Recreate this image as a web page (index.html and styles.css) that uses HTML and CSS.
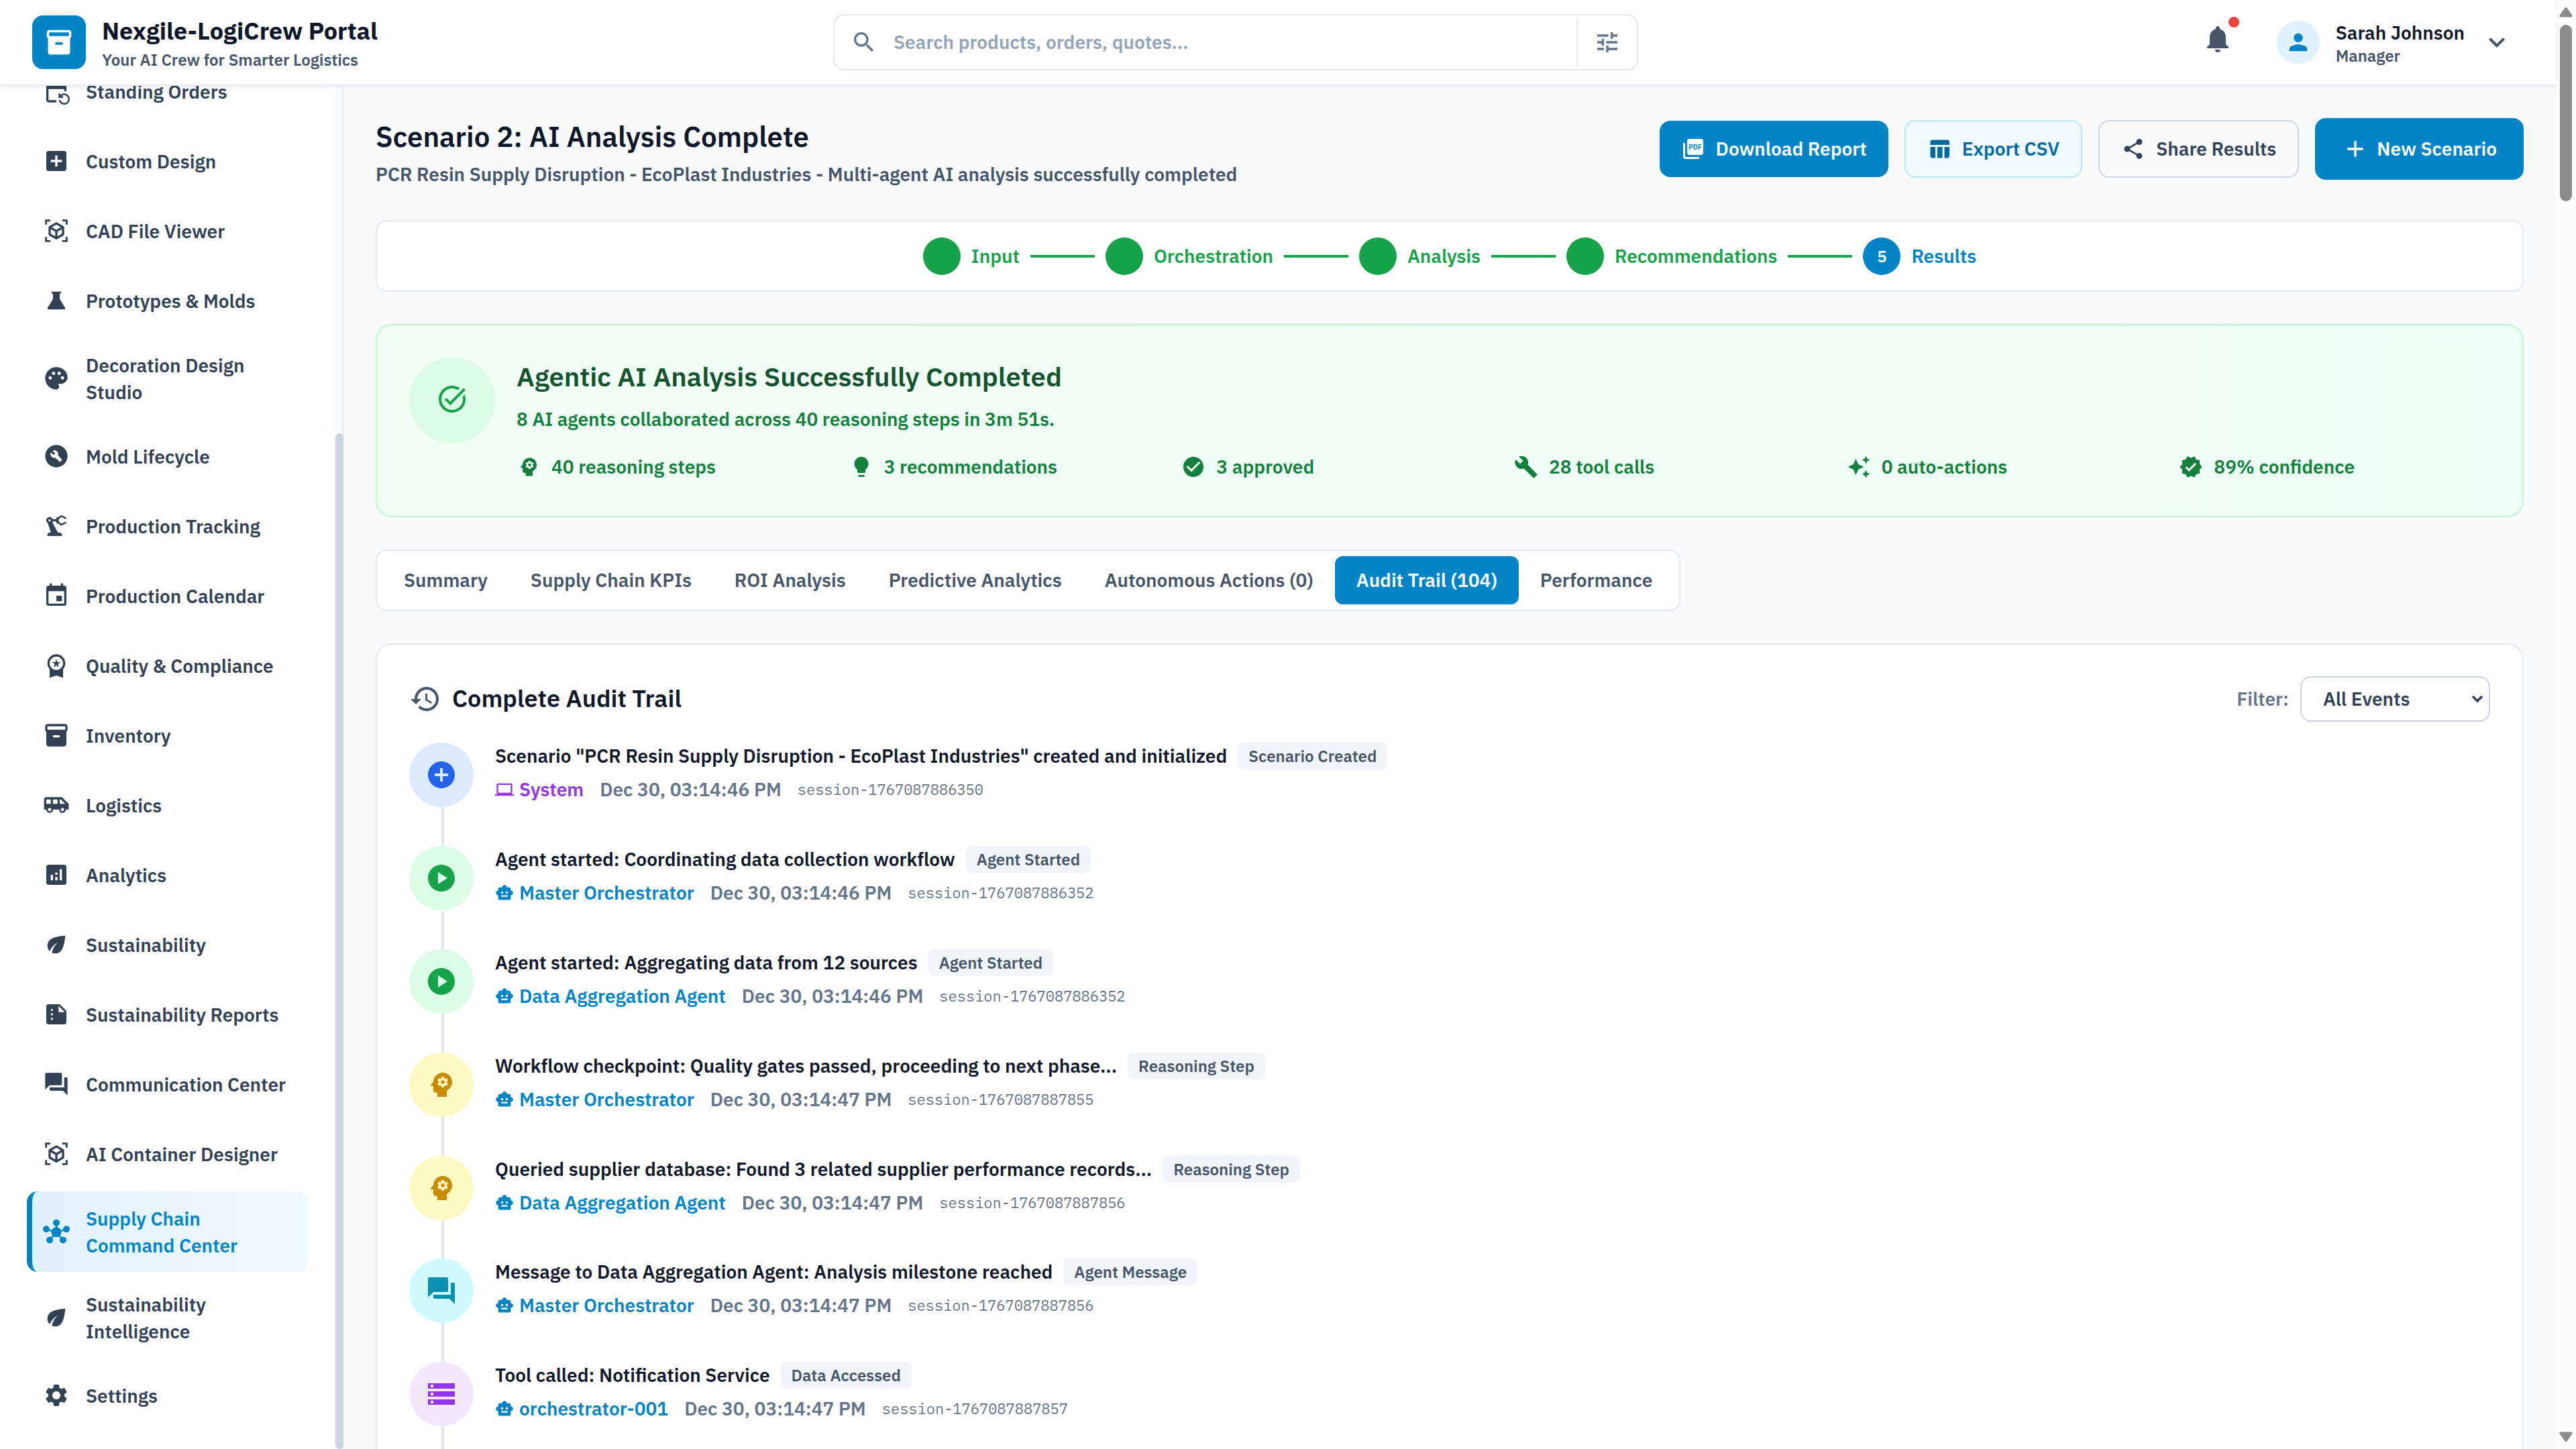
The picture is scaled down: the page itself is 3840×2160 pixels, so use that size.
FILE: index.html
```
<!DOCTYPE html>
<html lang="en">
<head>
	<meta charset="UTF-8">
	<meta name="viewport" content="width=device-width, initial-scale=1.0">
	<title>Nexgile-LogiCrew Portal</title>
	<link rel="stylesheet" href="styles.css">
</head>
<body>
	<!-- icon sprite -->
	<svg class="sprite" xmlns="http://www.w3.org/2000/svg">
		<symbol id="i-inventory" viewBox="0 0 24 24"><path d="M20 2H4c-1 0-2 .9-2 2v3.01c0 .72.43 1.34 1 1.69V20c0 1.1 1.1 2 2 2h14c.9 0 2-.9 2-2V8.7c.57-.35 1-.97 1-1.69V4c0-1.1-1-2-2-2zm-5 12H9v-2h6v2zm5-7H4V4h16v3z"/></symbol>
		<symbol id="i-repeat" viewBox="0 0 24 24"><path d="M21 12V6c0-1.1-.9-2-2-2h-1V2h-2v2H8V2H6v2H5c-1.1 0-2 .9-2 2v14c0 1.1.9 2 2 2h7v-2H5V10h14v2h2zm-5.36 8c.43 1.45 1.77 2.5 3.36 2.5 1.93 0 3.5-1.57 3.5-3.5s-1.57-3.5-3.5-3.5c-.95 0-1.82.38-2.45 1H18V18h-4v-4h1.5v1.43c.9-.88 2.14-1.43 3.5-1.43 2.76 0 5 2.24 5 5s-2.24 5-5 5c-2.42 0-4.44-1.72-4.9-4h1.54z"/></symbol>
		<symbol id="i-addbox" viewBox="0 0 24 24"><path d="M19 3H5c-1.11 0-2 .9-2 2v14c0 1.1.89 2 2 2h14c1.1 0 2-.9 2-2V5c0-1.1-.9-2-2-2zm-2 10h-4v4h-2v-4H7v-2h4V7h2v4h4v2z"/></symbol>
		<symbol id="i-cube" viewBox="0 0 24 24"><path fill="none" stroke="currentColor" stroke-width="1.7" d="M2.8 6.5V2.8h3.9M17.3 2.8h3.9v3.7M21.2 17.5v3.7h-3.9M6.7 21.2H2.8v-3.7"/><path fill="none" stroke="currentColor" stroke-width="2" stroke-linejoin="round" d="M12 5.4l6 3.4v6.5l-6 3.5-6-3.5V8.8zM6 8.8l6 3.5 6-3.5M12 12.3v6.5"/></symbol>
		<symbol id="i-flask" viewBox="0 0 24 24"><path d="M15.96 4H8.04c-.42 0-.65.48-.39.81L9 6.5v4.17L4.2 18.4c-.49.66-.02 1.6.8 1.6h14c.82 0 1.29-.94.8-1.6L15 10.67V6.5l1.35-1.69c.26-.33.03-.81-.39-.81z"/></symbol>
		<symbol id="i-palette" viewBox="0 0 24 24"><path d="M12 2C6.49 2 2 6.49 2 12s4.49 10 10 10c1.38 0 2.5-1.12 2.5-2.5 0-.61-.23-1.2-.64-1.67-.08-.1-.13-.21-.13-.33 0-.28.22-.5.5-.5H16c3.31 0 6-2.69 6-6 0-4.96-4.49-9-10-9zm5.5 11c-.83 0-1.5-.67-1.5-1.5s.67-1.5 1.5-1.5 1.5.67 1.5 1.5-.67 1.5-1.5 1.5zm-3-4c-.83 0-1.5-.67-1.5-1.5S13.67 6 14.5 6s1.5.67 1.5 1.5S15.33 9 14.5 9zM5 11.5c0-.83.67-1.5 1.5-1.5s1.5.67 1.5 1.5S7.33 13 6.5 13 5 12.33 5 11.5zm6-4c0 .83-.67 1.5-1.5 1.5S8 8.33 8 7.5 8.67 6 9.5 6s1.5.67 1.5 1.5z"/></symbol>
		<symbol id="i-buildcircle" viewBox="0 0 24 24"><path d="M12 2C6.48 2 2 6.48 2 12s4.48 10 10 10 10-4.48 10-10S17.52 2 12 2zm4.9 13.49l-1.4 1.4c-.2.2-.51.2-.71 0l-3.41-3.41c-1.22.43-2.64.17-3.62-.81-1.11-1.11-1.3-2.79-.59-4.1l2.35 2.35 1.41-1.41-2.35-2.34c1.32-.71 2.99-.52 4.1.59.98.98 1.24 2.4.81 3.62l3.41 3.41c.19.19.19.51 0 .7z"/></symbol>
		<symbol id="i-robotarm" viewBox="0 0 24 24"><path d="M19.93 8.35l-3.6 1.68L14 7.7V6.3l2.33-2.33 3.6 1.68c.38.18.82.01 1-.36.18-.38.01-.82-.36-1l-3.92-1.83c-.38-.18-.83-.1-1.13.2L13.78 4.4c-.18-.24-.46-.4-.78-.4-.55 0-1 .45-1 1v1H8.82C8.4 4.84 7.3 4 6 4 4.34 4 3 5.34 3 7c0 1.1.6 2.05 1.48 2.58L7.08 18H6c-1.1 0-2 .9-2 2v1h13v-1c0-1.1-.9-2-2-2h-1.62L8.41 8.77c.17-.24.31-.49.41-.77H12v1c0 .55.45 1 1 1 .32 0 .6-.16.78-.4l1.74 1.74c.3.3.75.38 1.13.2l3.92-1.83c.38-.18.54-.62.36-1-.18-.37-.62-.54-1-.36zM6 8c-.55 0-1-.45-1-1s.45-1 1-1 1 .45 1 1-.45 1-1 1z"/></symbol>
		<symbol id="i-calendar" viewBox="0 0 24 24"><path d="M17 12h-5v5h5v-5zM16 1v2H8V1H6v2H5c-1.11 0-1.99.9-1.99 2L3 19c0 1.1.89 2 2 2h14c1.1 0 2-.9 2-2V5c0-1.1-.9-2-2-2h-1V1h-2zm3 18H5V8h14v11z"/></symbol>
		<symbol id="i-premium" viewBox="0 0 24 24"><path d="M9.68 13.69L12 11.93l2.31 1.76-.88-2.85L15.75 9h-2.84L12 6.19 11.09 9H8.25l2.31 1.84-.88 2.85zM20 10c0-4.42-3.58-8-8-8s-8 3.58-8 8c0 2.03.76 3.87 2 5.28V23l6-2 6 2v-7.72c1.24-1.41 2-3.25 2-5.28zm-8-6c3.31 0 6 2.69 6 6s-2.69 6-6 6-6-2.69-6-6 2.69-6 6-6z"/></symbol>
		<symbol id="i-shuttle" viewBox="0 0 24 24"><path d="M17 5H3c-1.1 0-2 .89-2 2v9h2c0 1.65 1.34 3 3 3s3-1.35 3-3h5.5c0 1.65 1.34 3 3 3s3-1.35 3-3H23v-5l-6-6zM3 11V7h4v4H3zm3 6.5c-.83 0-1.5-.67-1.5-1.5s.67-1.5 1.5-1.5 1.5.67 1.5 1.5-.67 1.5-1.5 1.5zm7-6.5H9V7h4v4zm4.5 6.5c-.83 0-1.5-.67-1.5-1.5s.67-1.5 1.5-1.5 1.5.67 1.5 1.5-.67 1.5-1.5 1.5zM15 11V7h1l4 4h-5z"/></symbol>
		<symbol id="i-analytics" viewBox="0 0 24 24"><path d="M19 3H5c-1.1 0-2 .9-2 2v14c0 1.1.9 2 2 2h14c1.1 0 2-.9 2-2V5c0-1.1-.9-2-2-2zM9 17H7v-5h2v5zm4 0h-2v-3h2v3zm0-5h-2v-2h2v2zm4 5h-2V7h2v10z"/></symbol>
		<symbol id="i-eco" viewBox="0 0 24 24"><path d="M6.05 8.05c-2.73 2.73-2.73 7.15-.02 9.88 1.47-3.4 4.09-6.24 7.36-7.93-2.77 2.34-4.71 5.61-5.39 9.32 2.6 1.23 5.8.78 7.95-1.37C19.43 14.47 20 4 20 4S9.53 4.57 6.05 8.05z"/></symbol>
		<symbol id="i-summarize" viewBox="0 0 24 24"><path d="M15 3H5c-1.1 0-1.99.9-1.99 2L3 19c0 1.1.89 2 1.99 2H19c1.1 0 2-.9 2-2V9l-6-6zM8 17c-.55 0-1-.45-1-1s.45-1 1-1 1 .45 1 1-.45 1-1 1zm0-4c-.55 0-1-.45-1-1s.45-1 1-1 1 .45 1 1-.45 1-1 1zm0-4c-.55 0-1-.45-1-1s.45-1 1-1 1 .45 1 1-.45 1-1 1zm6 1V4.5l5.5 5.5H14z"/></symbol>
		<symbol id="i-forum" viewBox="0 0 24 24"><path d="M21 6h-2v9H6v2c0 .55.45 1 1 1h11l4 4V7c0-.55-.45-1-1-1zm-4 6V3c0-.55-.45-1-1-1H3c-.55 0-1 .45-1 1v14l4-4h10c.55 0 1-.45 1-1z"/></symbol>
		<symbol id="i-hub" viewBox="0 0 24 24"><circle cx="12" cy="12.5" r="4.5"/><circle cx="12" cy="4" r="3"/><circle cx="3" cy="9.8" r="3"/><circle cx="21" cy="9.8" r="3"/><circle cx="6" cy="19.5" r="3"/><circle cx="18" cy="19.5" r="3"/><path fill="none" stroke="currentColor" stroke-width="1.5" d="M12 3v9.5M3 9.8l9 2.7 9-2.7M6 19.5l6-7 6 7"/></symbol>
		<symbol id="i-settings" viewBox="0 0 24 24"><path d="M19.14 12.94c.04-.3.06-.61.06-.94 0-.32-.02-.64-.07-.94l2.03-1.58c.18-.14.23-.41.12-.61l-1.92-3.32c-.12-.22-.37-.29-.59-.22l-2.39.96c-.5-.38-1.03-.7-1.62-.94l-.36-2.54c-.04-.24-.24-.41-.48-.41h-3.84c-.24 0-.43.17-.47.41l-.36 2.54c-.59.24-1.13.57-1.62.94l-2.39-.96c-.22-.08-.47 0-.59.22L2.74 8.87c-.12.21-.08.47.12.61l2.03 1.58c-.05.3-.09.63-.09.94s.02.64.07.94l-2.03 1.58c-.18.14-.23.41-.12.61l1.92 3.32c.12.22.37.29.59.22l2.39-.96c.5.38 1.03.7 1.62.94l.36 2.54c.05.24.24.41.48.41h3.84c.24 0 .44-.17.47-.41l.36-2.54c.59-.24 1.13-.56 1.62-.94l2.39.96c.22.08.47 0 .59-.22l1.92-3.32c.12-.22.07-.47-.12-.61l-2.01-1.58zM12 15.6c-1.98 0-3.6-1.62-3.6-3.6s1.62-3.6 3.6-3.6 3.6 1.62 3.6 3.6-1.62 3.6-3.6 3.6z"/></symbol>
		<symbol id="i-search" viewBox="0 0 24 24"><path d="M15.5 14h-.79l-.28-.27C15.41 12.59 16 11.11 16 9.5 16 5.91 13.09 3 9.5 3S3 5.91 3 9.5 5.91 16 9.5 16c1.61 0 3.09-.59 4.23-1.57l.27.28v.79l5 4.99L20.49 19l-4.99-5zm-6 0C7.01 14 5 11.99 5 9.5S7.01 5 9.5 5 14 7.01 14 9.5 11.99 14 9.5 14z"/></symbol>
		<symbol id="i-tune" viewBox="0 0 24 24"><path d="M3 17v2h6v-2H3zM3 5v2h10V5H3zm10 16v-2h8v-2h-8v-2h-2v6h2zM7 9v2H3v2h4v2h2V9H7zm14 4v-2H11v2h10zm-6-4h2V7h4V5h-4V3h-2v6z"/></symbol>
		<symbol id="i-bell" viewBox="0 0 24 24"><path d="M12 22c1.1 0 2-.9 2-2h-4c0 1.1.89 2 2 2zm6-6v-5c0-3.07-1.64-5.64-4.5-6.32V4c0-.83-.67-1.5-1.5-1.5s-1.5.67-1.5 1.5v.68C7.63 5.36 6 7.92 6 11v5l-2 2v1h16v-1l-2-2z"/></symbol>
		<symbol id="i-person" viewBox="0 0 24 24"><path d="M12 12c2.21 0 4-1.79 4-4s-1.79-4-4-4-4 1.79-4 4 1.79 4 4 4zm0 2c-2.67 0-8 1.34-8 4v2h16v-2c0-2.66-5.33-4-8-4z"/></symbol>
		<symbol id="i-chevron" viewBox="0 0 24 24"><path d="M16.59 8.59L12 13.17 7.41 8.59 6 10l6 6 6-6z"/></symbol>
		<symbol id="i-pdf" viewBox="0 0 24 24"><path d="M20 2H8c-1.1 0-2 .9-2 2v12c0 1.1.9 2 2 2h12c1.1 0 2-.9 2-2V4c0-1.1-.9-2-2-2zM4 6H2v14c0 1.1.9 2 2 2h14v-2H4V6z"/><text class="pdf-text" x="14" y="12.7" text-anchor="middle" textLength="13">PDF</text></symbol>
		<symbol id="i-table" viewBox="0 0 24 24"><path d="M10 10.02h5V21h-5zM17 21h3c1.1 0 2-.9 2-2v-9h-5v11zm3-18H5c-1.1 0-2 .9-2 2v3h19V5c0-1.1-.9-2-2-2zM3 19c0 1.1.9 2 2 2h3V10H3v9z"/></symbol>
		<symbol id="i-share" viewBox="0 0 24 24"><path d="M18 16.08c-.76 0-1.44.3-1.96.77L8.91 12.7c.05-.23.09-.46.09-.7s-.04-.47-.09-.7l7.05-4.11c.54.5 1.25.81 2.04.81 1.66 0 3-1.34 3-3s-1.34-3-3-3-3 1.34-3 3c0 .24.04.47.09.7L8.04 9.81C7.5 9.31 6.79 9 6 9c-1.66 0-3 1.34-3 3s1.34 3 3 3c.79 0 1.5-.31 2.04-.81l7.12 4.16c-.05.21-.08.43-.08.65 0 1.61 1.31 2.92 2.92 2.92s2.92-1.31 2.92-2.92-1.31-2.92-2.92-2.92z"/></symbol>
		<symbol id="i-add" viewBox="0 0 24 24"><path d="M19 13h-6v6h-2v-6H5v-2h6V5h2v6h6v2z"/></symbol>
		<symbol id="i-task" viewBox="0 0 24 24"><path d="M22 5.18L10.59 16.6l-4.24-4.24 1.41-1.41 2.83 2.83 10-10L22 5.18zm-2.21 5.04c.13.57.21 1.17.21 1.78 0 4.42-3.58 8-8 8s-8-3.58-8-8 3.58-8 8-8c1.58 0 3.04.46 4.28 1.25l1.44-1.44C16.1 2.67 14.13 2 12 2 6.48 2 2 6.48 2 12s4.48 10 10 10 10-4.48 10-10c0-1.19-.22-2.33-.6-3.39l-1.61 1.61z"/></symbol>
		<symbol id="i-psychology" viewBox="0 0 24 24"><path d="M13 8.57c-.79 0-1.43.64-1.43 1.43s.64 1.43 1.43 1.43 1.43-.64 1.43-1.43-.64-1.43-1.43-1.43z"/><path d="M13 3C9.25 3 6.2 5.94 6.02 9.64L4.1 12.2c-.25.33-.01.8.4.8H6v3c0 1.1.9 2 2 2h1v3h7v-4.68c2.36-1.12 4-3.53 4-6.32 0-3.87-3.13-7-7-7zm3 7c0 .13-.01.26-.02.39l.83.66c.08.06.1.16.05.25l-.8 1.39c-.05.09-.16.12-.24.09l-.99-.4c-.21.16-.43.29-.67.39L14 13.83c-.01.1-.1.17-.2.17h-1.6c-.1 0-.18-.07-.2-.17l-.15-1.06c-.25-.1-.47-.23-.68-.39l-.99.4c-.09.03-.2 0-.25-.09l-.8-1.39c-.05-.08-.03-.19.05-.25l.84-.66c-.01-.13-.02-.26-.02-.39s.02-.27.04-.39l-.85-.66c-.08-.06-.1-.16-.05-.26l.8-1.38c.05-.09.15-.12.24-.09l1 .4c.2-.15.43-.29.67-.39L12 6.17c.02-.1.1-.17.2-.17h1.6c.1 0 .18.07.2.17l.15 1.06c.24.1.46.23.67.39l1-.4c.09-.03.2 0 .24.09l.8 1.38c.05.09.03.2-.05.26l-.85.66c.03.12.04.25.04.39z"/></symbol>
		<symbol id="i-bulb" viewBox="0 0 24 24"><path d="M9 21c0 .55.45 1 1 1h4c.55 0 1-.45 1-1v-1H9v1zm3-19C8.14 2 5 5.14 5 9c0 2.38 1.19 4.47 3 5.74V17c0 .55.45 1 1 1h6c.55 0 1-.45 1-1v-2.26c1.81-1.27 3-3.36 3-5.74 0-3.86-3.14-7-7-7z"/></symbol>
		<symbol id="i-check" viewBox="0 0 24 24"><path d="M12 2C6.48 2 2 6.48 2 12s4.48 10 10 10 10-4.48 10-10S17.52 2 12 2zm-2 15l-5-5 1.41-1.41L10 14.17l7.59-7.59L19 8l-9 9z"/></symbol>
		<symbol id="i-build" viewBox="0 0 24 24"><path d="M22.7 19l-9.1-9.1c.9-2.3.4-5-1.5-6.9-2-2-5-2.4-7.4-1.3L9 6 6 9 1.6 4.7C.4 7.1.9 10.1 2.9 12.1c1.9 1.9 4.6 2.4 6.9 1.5l9.1 9.1c.4.4 1 .4 1.4 0l2.3-2.3c.5-.4.5-1.1.1-1.4z"/></symbol>
		<symbol id="i-awesome" viewBox="0 0 24 24"><path d="M19 9l1.25-2.75L23 5l-2.75-1.25L19 1l-1.25 2.75L15 5l2.75 1.25L19 9zm-7.5.5L9 4 6.5 9.5 1 12l5.5 2.5L9 20l2.5-5.5L17 12l-5.5-2.5zM19 15l-1.25 2.75L15 19l2.75 1.25L19 23l1.25-2.75L23 19l-2.75-1.25L19 15z"/></symbol>
		<symbol id="i-verified" viewBox="0 0 24 24"><path d="M23 12l-2.44-2.79.34-3.69-3.61-.82-1.89-3.2L12 2.96 8.6 1.5 6.71 4.69 3.1 5.5l.34 3.7L1 12l2.44 2.79-.34 3.7 3.61.82L8.6 22.5l3.4-1.47 3.4 1.46 1.89-3.19 3.61-.82-.34-3.69L23 12zm-12.91 4.72l-3.8-3.81 1.48-1.48 2.32 2.33 5.85-5.87 1.48 1.48-7.33 7.35z"/></symbol>
		<symbol id="i-history" viewBox="0 0 24 24"><path d="M13 3c-4.97 0-9 4.03-9 9H1l3.89 3.89.07.14L9 12H6c0-3.87 3.13-7 7-7s7 3.13 7 7-3.13 7-7 7c-1.93 0-3.68-.79-4.94-2.06l-1.42 1.42C8.27 19.99 10.51 21 13 21c4.97 0 9-4.03 9-9s-4.03-9-9-9zm-1 5v5l4.28 2.54.72-1.21-3.5-2.08V8H12z"/></symbol>
		<symbol id="i-addcircle" viewBox="0 0 24 24"><path d="M12 2C6.48 2 2 6.48 2 12s4.48 10 10 10 10-4.48 10-10S17.52 2 12 2zm5 11h-4v4h-2v-4H7v-2h4V7h2v4h4v2z"/></symbol>
		<symbol id="i-play" viewBox="0 0 24 24"><path d="M12 2C6.48 2 2 6.48 2 12s4.48 10 10 10 10-4.48 10-10S17.52 2 12 2zM9.5 16.5v-9l7 4.5-7 4.5z"/></symbol>
		<symbol id="i-storage" viewBox="0 0 24 24"><path d="M2 20h20v-4H2v4zm2-3h2v2H4v-2zM2 4v4h20V4H2zm4 3H4V5h2v2zm-4 7h20v-4H2v4zm2-3h2v2H4v-2z"/></symbol>
		<symbol id="i-computer" viewBox="0 0 24 24"><path d="M20 18c1.1 0 1.99-.9 1.99-2L22 6c0-1.1-.9-2-2-2H4c-1.1 0-2 .9-2 2v10c0 1.1.9 2 2 2H0v2h24v-2h-4zM4 6h16v10H4V6z"/></symbol>
		<symbol id="i-bot" viewBox="0 0 24 24"><path d="M20 9V7c0-1.1-.9-2-2-2h-3c0-1.66-1.34-3-3-3S9 3.34 9 5H6c-1.1 0-2 .9-2 2v2c-1.66 0-3 1.34-3 3s1.34 3 3 3v4c0 1.1.9 2 2 2h12c1.1 0 2-.9 2-2v-4c1.66 0 3-1.34 3-3s-1.34-3-3-3zM7.5 11.5c0-.83.67-1.5 1.5-1.5s1.5.67 1.5 1.5S9.83 13 9 13s-1.5-.67-1.5-1.5zM16 17H8v-2h8v2zm-1-4c-.83 0-1.5-.67-1.5-1.5S14.17 10 15 10s1.5.67 1.5 1.5S15.83 13 15 13z"/></symbol>
	</svg>

	<div class="page">
		<header class="topbar">
			<div class="brand">
				<div class="brand-logo"><svg><use href="#i-inventory"/></svg></div>
				<div class="brand-text">
					<div class="brand-name">Nexgile-LogiCrew Portal</div>
					<div class="brand-tag">Your AI Crew for Smarter Logistics</div>
				</div>
			</div>
			<div class="search">
				<svg class="ic40"><use href="#i-search"/></svg>
				<span class="search-text">Search products, orders, quotes...</span>
				<div class="search-filter"><svg class="ic40"><use href="#i-tune"/></svg></div>
			</div>
			<div class="user">
				<div class="bell"><svg class="ic48"><use href="#i-bell"/></svg><span class="bell-dot"></span></div>
				<div class="avatar"><svg class="ic40"><use href="#i-person"/></svg></div>
				<div class="user-text">
					<div class="user-name">Sarah Johnson</div>
					<div class="user-role">Manager</div>
				</div>
				<svg class="ic48"><use href="#i-chevron"/></svg>
			</div>
		</header>

		<div class="body">
			<aside class="sidebar">
				<nav class="nav">
					<a class="nav-item"><svg><use href="#i-repeat"/></svg><span>Standing Orders</span></a>
					<a class="nav-item"><svg><use href="#i-addbox"/></svg><span>Custom Design</span></a>
					<a class="nav-item"><svg><use href="#i-cube"/></svg><span>CAD File Viewer</span></a>
					<a class="nav-item"><svg><use href="#i-flask"/></svg><span>Prototypes &amp; Molds</span></a>
					<a class="nav-item"><svg><use href="#i-palette"/></svg><span>Decoration Design<br>Studio</span></a>
					<a class="nav-item"><svg><use href="#i-buildcircle"/></svg><span>Mold Lifecycle</span></a>
					<a class="nav-item"><svg><use href="#i-robotarm"/></svg><span>Production Tracking</span></a>
					<a class="nav-item"><svg><use href="#i-calendar"/></svg><span>Production Calendar</span></a>
					<a class="nav-item"><svg><use href="#i-premium"/></svg><span>Quality &amp; Compliance</span></a>
					<a class="nav-item"><svg><use href="#i-inventory"/></svg><span>Inventory</span></a>
					<a class="nav-item"><svg><use href="#i-shuttle"/></svg><span>Logistics</span></a>
					<a class="nav-item"><svg><use href="#i-analytics"/></svg><span>Analytics</span></a>
					<a class="nav-item"><svg><use href="#i-eco"/></svg><span>Sustainability</span></a>
					<a class="nav-item"><svg><use href="#i-summarize"/></svg><span>Sustainability Reports</span></a>
					<a class="nav-item"><svg><use href="#i-forum"/></svg><span>Communication Center</span></a>
					<a class="nav-item"><svg><use href="#i-cube"/></svg><span>AI Container Designer</span></a>
					<a class="nav-item active"><svg><use href="#i-hub"/></svg><span>Supply Chain<br>Command Center</span></a>
					<a class="nav-item"><svg><use href="#i-eco"/></svg><span>Sustainability<br>Intelligence</span></a>
					<a class="nav-item"><svg><use href="#i-settings"/></svg><span>Settings</span></a>
				</nav>
				<div class="side-scroll"><div class="side-thumb"></div></div>
			</aside>

			<main class="main">
				<div class="page-head">
					<div>
						<h1>Scenario 2: AI Analysis Complete</h1>
						<p>PCR Resin Supply Disruption - EcoPlast Industries - Multi-agent AI analysis successfully completed</p>
					</div>
					<div class="actions">
						<button class="btn btn-primary"><svg><use href="#i-pdf"/></svg>Download Report</button>
						<button class="btn btn-light"><svg><use href="#i-table"/></svg>Export CSV</button>
						<button class="btn btn-outline"><svg><use href="#i-share"/></svg>Share Results</button>
						<button class="btn btn-primary btn-new"><svg><use href="#i-add"/></svg>New Scenario</button>
					</div>
				</div>

				<section class="steps">
					<span class="step-dot"></span><span class="step-label">Input</span><span class="step-line"></span>
					<span class="step-dot"></span><span class="step-label">Orchestration</span><span class="step-line"></span>
					<span class="step-dot"></span><span class="step-label">Analysis</span><span class="step-line"></span>
					<span class="step-dot"></span><span class="step-label">Recommendations</span><span class="step-line"></span>
					<span class="step-dot current">5</span><span class="step-label current">Results</span>
				</section>

				<section class="banner">
					<div class="banner-icon"><svg class="ic48"><use href="#i-task"/></svg></div>
					<div class="banner-body">
						<h2>Agentic AI Analysis Successfully Completed</h2>
						<p>8 AI agents collaborated across 40 reasoning steps in 3m 51s.</p>
						<div class="stats">
							<div class="stat"><svg><use href="#i-psychology"/></svg>40 reasoning steps</div>
							<div class="stat"><svg><use href="#i-bulb"/></svg>3 recommendations</div>
							<div class="stat"><svg><use href="#i-check"/></svg>3 approved</div>
							<div class="stat"><svg><use href="#i-build"/></svg>28 tool calls</div>
							<div class="stat"><svg><use href="#i-awesome"/></svg>0 auto-actions</div>
							<div class="stat"><svg><use href="#i-verified"/></svg>89% confidence</div>
						</div>
					</div>
				</section>

				<div class="tabs">
					<a class="tab">Summary</a>
					<a class="tab">Supply Chain KPIs</a>
					<a class="tab">ROI Analysis</a>
					<a class="tab">Predictive Analytics</a>
					<a class="tab">Autonomous Actions (0)</a>
					<a class="tab active">Audit Trail (104)</a>
					<a class="tab">Performance</a>
				</div>

				<section class="card">
					<div class="card-head">
						<svg class="ic48"><use href="#i-history"/></svg>
						<h3>Complete Audit Trail</h3>
						<span class="filter-label">Filter:</span>
						<div class="select"><span>All Events</span><svg viewBox="0 0 18 12"><path d="M2 2l7 7 7-7"/></svg></div>
					</div>

					<div class="event">
						<div class="rail"><div class="badge-icon blue"><svg class="ic48"><use href="#i-addcircle"/></svg></div><div class="rail-line"></div></div>
						<div class="event-body">
							<div class="event-top"><span class="event-title">Scenario "PCR Resin Supply Disruption - EcoPlast Industries" created and initialized</span><span class="tag">Scenario Created</span></div>
							<div class="event-meta"><span class="actor system"><svg><use href="#i-computer"/></svg>System</span><span class="time">Dec 30, 03:14:46 PM</span><span class="session">session-1767087886350</span></div>
						</div>
					</div>
					<div class="event">
						<div class="rail"><div class="badge-icon green"><svg class="ic48"><use href="#i-play"/></svg></div><div class="rail-line"></div></div>
						<div class="event-body">
							<div class="event-top"><span class="event-title">Agent started: Coordinating data collection workflow</span><span class="tag">Agent Started</span></div>
							<div class="event-meta"><span class="actor"><svg><use href="#i-bot"/></svg>Master Orchestrator</span><span class="time">Dec 30, 03:14:46 PM</span><span class="session">session-1767087886352</span></div>
						</div>
					</div>
					<div class="event">
						<div class="rail"><div class="badge-icon green"><svg class="ic48"><use href="#i-play"/></svg></div><div class="rail-line"></div></div>
						<div class="event-body">
							<div class="event-top"><span class="event-title">Agent started: Aggregating data from 12 sources</span><span class="tag">Agent Started</span></div>
							<div class="event-meta"><span class="actor"><svg><use href="#i-bot"/></svg>Data Aggregation Agent</span><span class="time">Dec 30, 03:14:46 PM</span><span class="session">session-1767087886352</span></div>
						</div>
					</div>
					<div class="event">
						<div class="rail"><div class="badge-icon yellow"><svg class="ic48"><use href="#i-psychology"/></svg></div><div class="rail-line"></div></div>
						<div class="event-body">
							<div class="event-top"><span class="event-title">Workflow checkpoint: Quality gates passed, proceeding to next phase...</span><span class="tag">Reasoning Step</span></div>
							<div class="event-meta"><span class="actor"><svg><use href="#i-bot"/></svg>Master Orchestrator</span><span class="time">Dec 30, 03:14:47 PM</span><span class="session">session-1767087887855</span></div>
						</div>
					</div>
					<div class="event">
						<div class="rail"><div class="badge-icon yellow"><svg class="ic48"><use href="#i-psychology"/></svg></div><div class="rail-line"></div></div>
						<div class="event-body">
							<div class="event-top"><span class="event-title">Queried supplier database: Found 3 related supplier performance records...</span><span class="tag">Reasoning Step</span></div>
							<div class="event-meta"><span class="actor"><svg><use href="#i-bot"/></svg>Data Aggregation Agent</span><span class="time">Dec 30, 03:14:47 PM</span><span class="session">session-1767087887856</span></div>
						</div>
					</div>
					<div class="event">
						<div class="rail"><div class="badge-icon cyan"><svg class="ic48"><use href="#i-forum"/></svg></div><div class="rail-line"></div></div>
						<div class="event-body">
							<div class="event-top"><span class="event-title">Message to Data Aggregation Agent: Analysis milestone reached</span><span class="tag">Agent Message</span></div>
							<div class="event-meta"><span class="actor"><svg><use href="#i-bot"/></svg>Master Orchestrator</span><span class="time">Dec 30, 03:14:47 PM</span><span class="session">session-1767087887856</span></div>
						</div>
					</div>
					<div class="event">
						<div class="rail"><div class="badge-icon purple"><svg class="ic48"><use href="#i-storage"/></svg></div><div class="rail-line"></div></div>
						<div class="event-body">
							<div class="event-top"><span class="event-title">Tool called: Notification Service</span><span class="tag">Data Accessed</span></div>
							<div class="event-meta"><span class="actor"><svg><use href="#i-bot"/></svg>orchestrator-001</span><span class="time">Dec 30, 03:14:47 PM</span><span class="session">session-1767087887857</span></div>
						</div>
					</div>
				</section>
			</main>
		</div>
	</div>

	<div class="scrollbar">
		<svg class="arrow" viewBox="0 0 20 16"><path d="M8.5 1.5Q10 0 11.5 1.5L19.5 13Q20 15.5 18 15.5H2Q0 15.5 .5 13z"/></svg>
		<div class="thumb"></div>
		<svg class="arrow down" viewBox="0 0 20 16"><path d="M8.5 1.5Q10 0 11.5 1.5L19.5 13Q20 15.5 18 15.5H2Q0 15.5 .5 13z"/></svg>
	</div>
</body>
</html>
```
FILE: styles.css
```
* {
	box-sizing: border-box;
}
body {
	margin: 0;
	width: 3840px;
	height: 2160px;
	overflow: hidden;
	display: flex;
	background: #fcfcfc;
	font-family: "IBM Plex Sans", Roboto, "Noto Sans", sans-serif;
	font-size: 28px;
	font-weight: 600;
	line-height: 40px;
	color: #0f172a;
	white-space: nowrap;
}
h1, h2, h3, p {
	margin: 0;
}
svg {
	display: block;
	flex: none;
	fill: currentColor;
}
.sprite {
	display: none;
}
.ic40 {
	width: 40px;
	height: 40px;
}
.ic48 {
	width: 48px;
	height: 48px;
}
.page {
	width: 3810px;
	height: 2160px;
	display: flex;
	flex-direction: column;
}

/* top bar */
.topbar {
	position: relative;
	z-index: 2;
	flex: none;
	height: 128px;
	padding: 0 64px 0 48px;
	display: grid;
	grid-template-columns: 1194px 1200px 1fr;
	align-items: center;
	background: #fff;
	border-bottom: 2px solid #e2e8f0;
	box-shadow: 0 2px 6px rgba(15, 23, 42, 0.06);
}
.brand {
	display: flex;
	align-items: center;
	gap: 24px;
}
.brand-logo {
	width: 80px;
	height: 80px;
	border-radius: 16px;
	background: #0284c7;
	color: #fff;
	display: flex;
	align-items: center;
	justify-content: center;
}
.brand-logo svg {
	width: 44px;
	height: 44px;
}
.brand-text {
	padding-top: 3px;
}
.brand-name {
	font-size: 36px;
	font-weight: 700;
	line-height: 50px;
}
.brand-tag {
	font-size: 24px;
	line-height: 37px;
	color: #475569;
}
.search {
	height: 84px;
	border: 2px solid #e2e8f0;
	border-radius: 16px;
	padding-left: 24px;
	display: flex;
	align-items: center;
	color: #64748b;
}
.search-text {
	flex: 1;
	margin-left: 24px;
	color: #94a3b8;
}
.search-filter {
	height: 72px;
	width: 90px;
	border-left: 2px solid #e2e8f0;
	display: flex;
	align-items: center;
	justify-content: center;
}
.user {
	display: flex;
	align-items: center;
	justify-content: flex-end;
	color: #475569;
}
.bell {
	position: relative;
	margin-right: 64px;
	top: -5px;
}
.bell-dot {
	position: absolute;
	top: -9px;
	right: -8px;
	width: 16px;
	height: 16px;
	border-radius: 50%;
	background: #ef4444;
}
.avatar {
	width: 64px;
	height: 64px;
	border-radius: 50%;
	background: #e0f2fe;
	color: #0284c7;
	display: flex;
	align-items: center;
	justify-content: center;
}
.user-text {
	margin: 0 24px;
	padding-top: 3px;
}
.user-name {
	line-height: 36px;
	color: #0f172a;
}
.user-role {
	font-size: 24px;
	line-height: 32px;
}

/* sidebar */
.body {
	flex: 1;
	min-height: 0;
	display: flex;
}
.sidebar {
	position: relative;
	flex: none;
	width: 512px;
	background: #fff;
	border-right: 2px solid #e2e8f0;
	display: flex;
}
.nav {
	flex: 1;
	display: flex;
	flex-direction: column;
	justify-content: flex-end;
	gap: 8px;
	padding: 0 41px 32px 40px;
}
.nav-item {
	flex: none;
	min-height: 96px;
	border-left: 8px solid transparent;
	border-radius: 16px;
	padding: 19px 16px;
	display: flex;
	align-items: center;
	gap: 24px;
	color: #334155;
}
.nav-item span {
	padding-top: 2px;
}
.nav-item svg {
	width: 40px;
	height: 40px;
}
.nav-item.active {
	border-left-color: #0284c7;
	background: linear-gradient(90deg, #e0f2fe, #f0f9ff);
	color: #0284c7;
}
.side-scroll {
	width: 10px;
	background: #f8fafc;
	padding-top: 518px;
}
.side-thumb {
	position: relative;
	width: 12px;
	height: 1514px;
	border-radius: 6px;
	background: #cbd5e1;
}

/* main column */
.main {
	flex: 1;
	min-width: 0;
	overflow: hidden;
	background: #f8fafc;
	padding: 48px 48px 0;
	display: flex;
	flex-direction: column;
	gap: 48px;
}
.main > * {
	flex: none;
}
.page-head {
	display: flex;
	justify-content: space-between;
	align-items: flex-start;
}
h1 {
	font-size: 42px;
	font-weight: 600;
	line-height: 56px;
	margin-bottom: 8px;
}
.page-head p {
	color: #475569;
}
.actions {
	display: flex;
	align-items: center;
	gap: 24px;
}
.btn {
	height: 84px;
	padding: 0 32px;
	border: 0;
	border-radius: 16px;
	font: inherit;
	display: flex;
	align-items: center;
	gap: 16px;
}
.btn svg {
	width: 36px;
	height: 36px;
}
.btn-primary {
	background: #0284c7;
	color: #fff;
}
.btn-light {
	height: 86px;
	border: 2px solid #bae6fd;
	background: #f0f9ff;
	color: #0369a1;
}
.btn-outline {
	height: 86px;
	border: 2px solid #cbd5e1;
	background: #f8fafc;
	color: #334155;
}
.btn-new {
	height: 92px;
	padding: 0 40px;
	gap: 12px;
}
.btn-new svg {
	width: 40px;
	height: 40px;
}
.pdf-text {
	font: 700 7px Roboto, sans-serif;
	fill: #0284c7;
}

/* progress steps */
.steps {
	height: 107px;
	background: #fff;
	border: 2px solid #e2e8f0;
	border-radius: 16px;
	display: flex;
	align-items: center;
	justify-content: center;
	gap: 16px;
	color: #16a34a;
}
.step-dot {
	width: 56px;
	height: 56px;
	border-radius: 50%;
	background: #16a34a;
	color: #fff;
	font-size: 24px;
	display: flex;
	align-items: center;
	justify-content: center;
}
.step-dot.current {
	background: #0284c7;
}
.step-label.current {
	color: #0284c7;
}
.step-line {
	width: 96px;
	height: 4px;
	background: #16a34a;
}

/* success banner */
.banner {
	height: 288px;
	padding: 48px;
	border: 2px solid #bbf7d0;
	border-radius: 24px;
	background: linear-gradient(90deg, #f0fdf4, #ecfdf5);
	display: flex;
	gap: 32px;
	color: #15803d;
}
.banner-icon {
	flex: none;
	width: 128px;
	height: 128px;
	padding-bottom: 4px;
	border-radius: 50%;
	background: #dcfce7;
	color: #16a34a;
	display: flex;
	align-items: center;
	justify-content: center;
}
.banner-body {
	flex: 1;
}
h2 {
	font-size: 40px;
	font-weight: 600;
	line-height: 56px;
	margin-bottom: 16px;
	color: #14532d;
}
.stats {
	display: grid;
	grid-template-columns: repeat(6, 1fr);
	gap: 32px;
	margin-top: 31px;
}
.stat {
	display: flex;
	align-items: center;
	gap: 16px;
}
.stat svg {
	width: 36px;
	height: 36px;
}

/* tabs */
.tabs {
	align-self: flex-start;
	padding: 8px;
	background: #fff;
	border: 2px solid #e2e8f0;
	border-radius: 16px;
	display: flex;
	color: #475569;
}
.tab {
	height: 72px;
	padding: 0 32px;
	line-height: 72px;
	border-radius: 12px;
}
.tab.active {
	background: #0284c7;
	color: #fff;
}

/* audit trail */
.card {
	padding: 47px 48px 48px;
	background: #fff;
	border: 2px solid #e2e8f0;
	border-radius: 24px;
}
.card-head {
	height: 68px;
	margin-bottom: 31px;
	display: flex;
	align-items: center;
}
.card-head > svg {
	color: #475569;
}
h3 {
	flex: 1;
	margin: 0 0 3px 16px;
	font-size: 36px;
	font-weight: 600;
}
.filter-label {
	color: #64748b;
}
.select {
	width: 283px;
	height: 68px;
	margin-left: 17px;
	padding: 0 8px 0 32px;
	border: 2px solid #cbd5e1;
	border-radius: 16px;
	display: flex;
	align-items: center;
	justify-content: space-between;
	color: #334155;
}
.select svg {
	width: 18px;
	height: 12px;
	fill: none;
	stroke: #334155;
	stroke-width: 3.5px;
}
.event {
	height: 153.9px;
	display: flex;
	gap: 32px;
}
.rail {
	width: 96px;
	display: flex;
	flex-direction: column;
}
.rail-line {
	flex: 1;
	width: 4px;
	margin-left: 48px;
	background: #e2e8f0;
}
.badge-icon {
	width: 96px;
	height: 96px;
	border-radius: 50%;
	display: flex;
	align-items: center;
	justify-content: center;
}
.blue {
	background: #dbeafe;
	color: #2563eb;
}
.green {
	background: #dcfce7;
	color: #16a34a;
}
.yellow {
	background: #fef9c3;
	color: #ca8a04;
}
.cyan {
	background: #cffafe;
	color: #0891b2;
}
.purple {
	background: #f3e8ff;
	color: #9333ea;
}
.event-top {
	display: flex;
	align-items: center;
	gap: 16px;
}
.tag {
	height: 40px;
	padding: 0 16px;
	border-radius: 8px;
	background: #f1f5f9;
	font-size: 24px;
	color: #475569;
}
.event-meta {
	margin-top: 10px;
	display: flex;
	align-items: center;
	gap: 24px;
	color: #64748b;
}
.actor {
	display: flex;
	align-items: center;
	gap: 8px;
	color: #0284c7;
}
.actor.system {
	color: #9333ea;
}
.actor svg {
	width: 28px;
	height: 28px;
}
.session {
	font-family: "IBM Plex Mono", "Liberation Mono", monospace;
	font-size: 22px;
	font-weight: 400;
}

/* page scrollbar */
.scrollbar {
	width: 30px;
	padding: 10px 5px;
	display: flex;
	flex-direction: column;
	align-items: center;
	color: #8b8b8b;
}
.arrow {
	width: 20px;
	height: 16px;
}
.arrow.down {
	margin-top: auto;
	transform: rotate(180deg);
}
.thumb {
	width: 18px;
	height: 263px;
	margin-top: 11px;
	border-radius: 9px;
	background: #8b8b8b;
}
```
